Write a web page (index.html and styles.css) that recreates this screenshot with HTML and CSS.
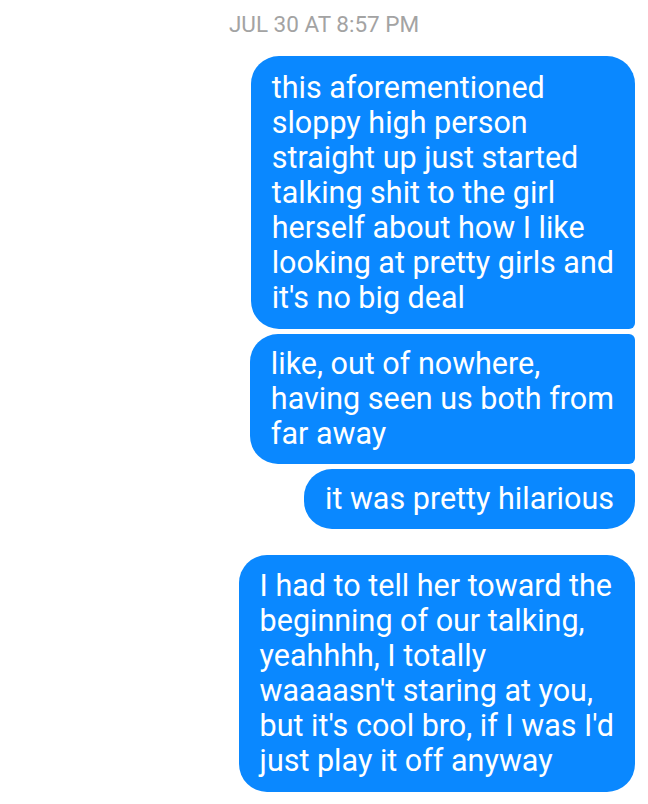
FILE: index.html
```html
<!DOCTYPE html>
<html>
<head>
<meta charset="utf-8">
<link rel="stylesheet" href="styles.css">
</head>
<body>
<div class="thread">
  <div class="stamp">JUL 30 AT 8:57 PM</div>
  <div class="group">
    <div class="bubble first">this aforementioned<br>sloppy high person<br>straight up just started<br>talking shit to the girl<br>herself about how I like<br>looking at pretty girls and<br>it's no big deal</div>
    <div class="bubble middle">like, out of nowhere,<br>having seen us both from<br>far away</div>
    <div class="bubble last">it was pretty hilarious</div>
  </div>
  <div class="group">
    <div class="bubble single">I had to tell her toward the<br>beginning of our talking,<br>yeahhhh, I totally<br>waaaasn't staring at you,<br>but it's cool bro, if I was I'd<br>just play it off anyway</div>
  </div>
</div>
</body>
</html>
```
FILE: styles.css
```css
html, body {
  margin: 0;
  padding: 0;
  background: #ffffff;
}
.thread {
  width: 648px;
  height: 804px;
  overflow: hidden;
  display: flex;
  flex-direction: column;
  font-family: Roboto, "Noto Sans", sans-serif;
}
.stamp {
  flex-shrink: 0;
  text-align: center;
  color: #a3a3a3;
  font-size: 22.5px;
  line-height: 26px;
  padding-top: 11px;
  height: 56px;
  box-sizing: border-box;
}
.group {
  flex-shrink: 0;
  display: flex;
  flex-direction: column;
  align-items: flex-end;
  gap: 5px;
  padding-right: 13px;
  margin-bottom: 26px;
}
.bubble {
  flex-shrink: 0;
  background: #0a88ff;
  color: #ffffff;
  font-size: 30.5px;
  line-height: 35px;
  padding: 14px 21px 14px 21px;
  white-space: nowrap;
  border-radius: 28px;
}
.first { border-bottom-right-radius: 6px; }
.middle {
  padding-top: 12px;
  padding-bottom: 13px;
  border-top-right-radius: 6px;
  border-bottom-right-radius: 6px;
}
.last {
  padding-top: 12px;
  padding-bottom: 13px;
  border-top-right-radius: 6px;
}
.single {
  padding-top: 13px;
  padding-bottom: 14px;
}
```
